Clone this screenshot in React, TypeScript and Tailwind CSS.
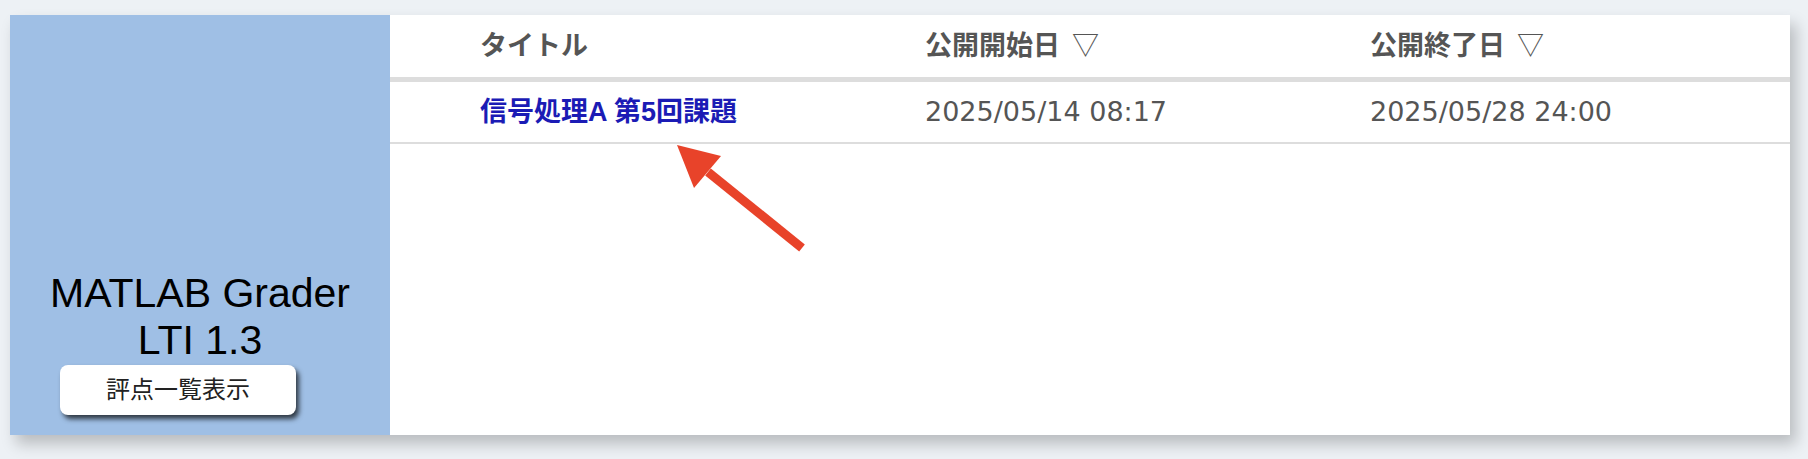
import React from "react";

const jp = '"Liberation Sans", "Noto Sans CJK JP", sans-serif';
const num = '"DejaVu Sans", "Noto Sans CJK JP", sans-serif';

export default function App() {
  return (
    <div className="w-[1808px] h-[459px] bg-[#edf1f5] pt-[15px] pl-[10px]" style={{ fontFamily: jp }}>
      <div className="flex w-[1780px] h-[420px] bg-white shadow-[6px_9px_14px_rgba(0,0,0,0.22)]">
        <div className="w-[380px] shrink-0 bg-[#9fbfe5] flex flex-col items-center justify-end pb-[20px]">
          <div className="text-[41px] leading-[47px] text-black text-center">
            MATLAB Grader
            <br />
            LTI 1.3
          </div>
          <button className="mt-px self-start ml-[50px] w-[236px] h-[50px] bg-white rounded-[8px] text-[24px] text-[#222] shadow-[3px_4px_5px_rgba(0,0,0,0.7)] flex items-center justify-center">
            評点一覧表示
          </button>
        </div>
        <div className="relative flex-1">
          <div className="flex h-[67px] items-center pl-[90px] text-[27px] font-bold text-[#555] border-b-[5px] border-[#dddddd]">
            <div className="w-[445px]">タイトル</div>
            <div className="w-[445px]">
              公開開始日<span className="ml-[12px] font-normal">▽</span>
            </div>
            <div>
              公開終了日<span className="ml-[12px] font-normal">▽</span>
            </div>
          </div>
          <div className="flex h-[62px] items-center pl-[90px] text-[27px] text-[#555] border-b-2 border-[#dddddd]">
            <div className="w-[445px] font-bold text-[#1b1bb5]">信号処理A 第5回課題</div>
            <div className="w-[445px]" style={{ fontFamily: num }}>2025/05/14 08:17</div>
            <div style={{ fontFamily: num }}>2025/05/28 24:00</div>
          </div>
          <svg className="absolute left-0 top-0" width="500" height="260" viewBox="0 0 500 260">
            <line x1="318" y1="157" x2="412" y2="233" stroke="#e8432a" strokeWidth="9" />
            <polygon points="287,130 331,141 304,173" fill="#e8432a" />
          </svg>
        </div>
      </div>
    </div>
  );
}
